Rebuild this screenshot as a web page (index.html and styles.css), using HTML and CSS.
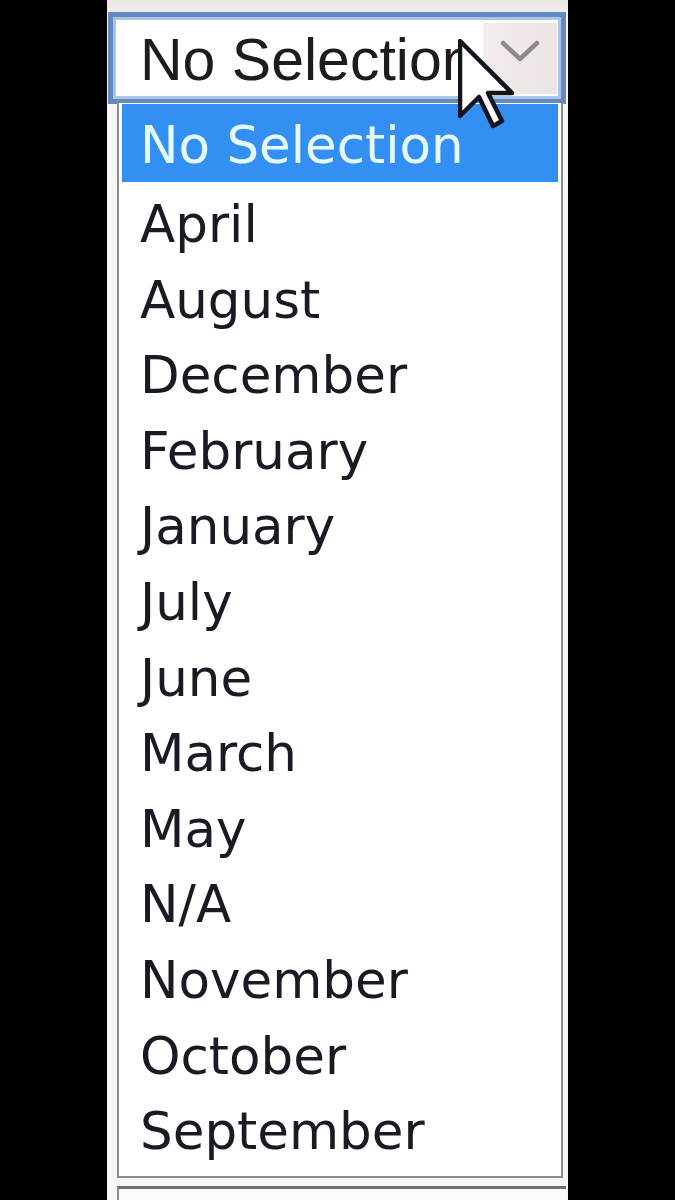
FILE: index.html
```html
<!DOCTYPE html>
<html lang="en">
<head>
<meta charset="utf-8">
<title>Month picker</title>
<link rel="stylesheet" href="styles.css">
</head>
<body>
<div class="page">
  <div class="top-strip"></div>
  <div class="select">
    <span class="select-value">No Selection</span>
    <span class="select-button">
      <svg class="chevron" width="40" height="24" viewBox="0 0 40 24">
        <polyline points="3,3 20,19 37,3" fill="none" stroke="#8d8a8a" stroke-width="4.5" stroke-linejoin="round" stroke-linecap="round"/>
      </svg>
    </span>
  </div>
  <ul class="options">
    <li class="option selected">No Selection</li>
    <li class="option">April</li>
    <li class="option">August</li>
    <li class="option">December</li>
    <li class="option">February</li>
    <li class="option">January</li>
    <li class="option">July</li>
    <li class="option">June</li>
    <li class="option">March</li>
    <li class="option">May</li>
    <li class="option">N/A</li>
    <li class="option">November</li>
    <li class="option">October</li>
    <li class="option">September</li>
  </ul>
  <div class="next-field"></div>

  <svg class="cursor" width="60" height="95" viewBox="0 0 60 95">
    <path d="M2 2 L2 77 L21 58 L35 87 L44 82 L30 54 L54 54 Z" fill="#ffffff" stroke="#14141e" stroke-width="4.5" stroke-linejoin="round"/>
  </svg>
</div>
</body>
</html>
```
FILE: styles.css
```css
html, body {
  margin: 0;
  padding: 0;
  background: #000000;
}

.page {
  position: relative;
  width: 461px;
  height: 1200px;
  margin-left: 107px;
  background: #f7f6f4;
  overflow: hidden;
}

.top-strip {
  height: 12px;
  background: linear-gradient(#ebe6e1, #f1ede8);
}

/* closed combo box */
.select {
  box-sizing: border-box;
  display: flex;
  align-items: stretch;
  width: 458px;
  height: 92px;
  margin-left: 1px;
  border: 5px solid #6489bd;
  box-shadow: inset 0 0 0 3px #a8c4e6;
  background: #ffffff;
  padding: 6px 4px 5px 0;
}

.select-value {
  flex: 1;
  padding-left: 27px;
  font-family: "Liberation Sans", Arial, sans-serif;
  font-size: 59px;
  line-height: 74px;
  color: #1e1a1e;
  white-space: nowrap;
}

.select-button {
  width: 74px;
  display: flex;
  align-items: flex-start;
  justify-content: center;
  padding-top: 17px;
  background: linear-gradient(90deg, #f3eceb, #ebe4e3);
}

/* open option list */
.options {
  box-sizing: border-box;
  list-style: none;
  width: 446px;
  margin: -1px 0 0 10px;
  padding: 1px 3px 11px 3px;
  border: 2px solid #8b8b93;
  border-top: none;
  background: #ffffff;
  font-family: "DejaVu Sans", Verdana, sans-serif;
  font-size: 51.5px;
  color: #1a1924;
}

.option {
  box-sizing: border-box;
  height: 75.6px;
  padding: 9px 0 0 18px;
  line-height: 66px;
  white-space: nowrap;
}

.option.selected {
  background: #3390f2;
  color: #e6fbff;
  height: 78px;
  padding-top: 8px;
}

.next-field {
  box-sizing: border-box;
  width: 449px;
  height: 40px;
  margin: 8px 0 0 10px;
  border-top: 3px solid #6c6d78;
  border-left: 2px solid #8b8b93;
  background: #fbfbfb;
}

/* mouse pointer over the open combo box */
.cursor {
  position: absolute;
  left: 351px;
  top: 39px;
}
```
